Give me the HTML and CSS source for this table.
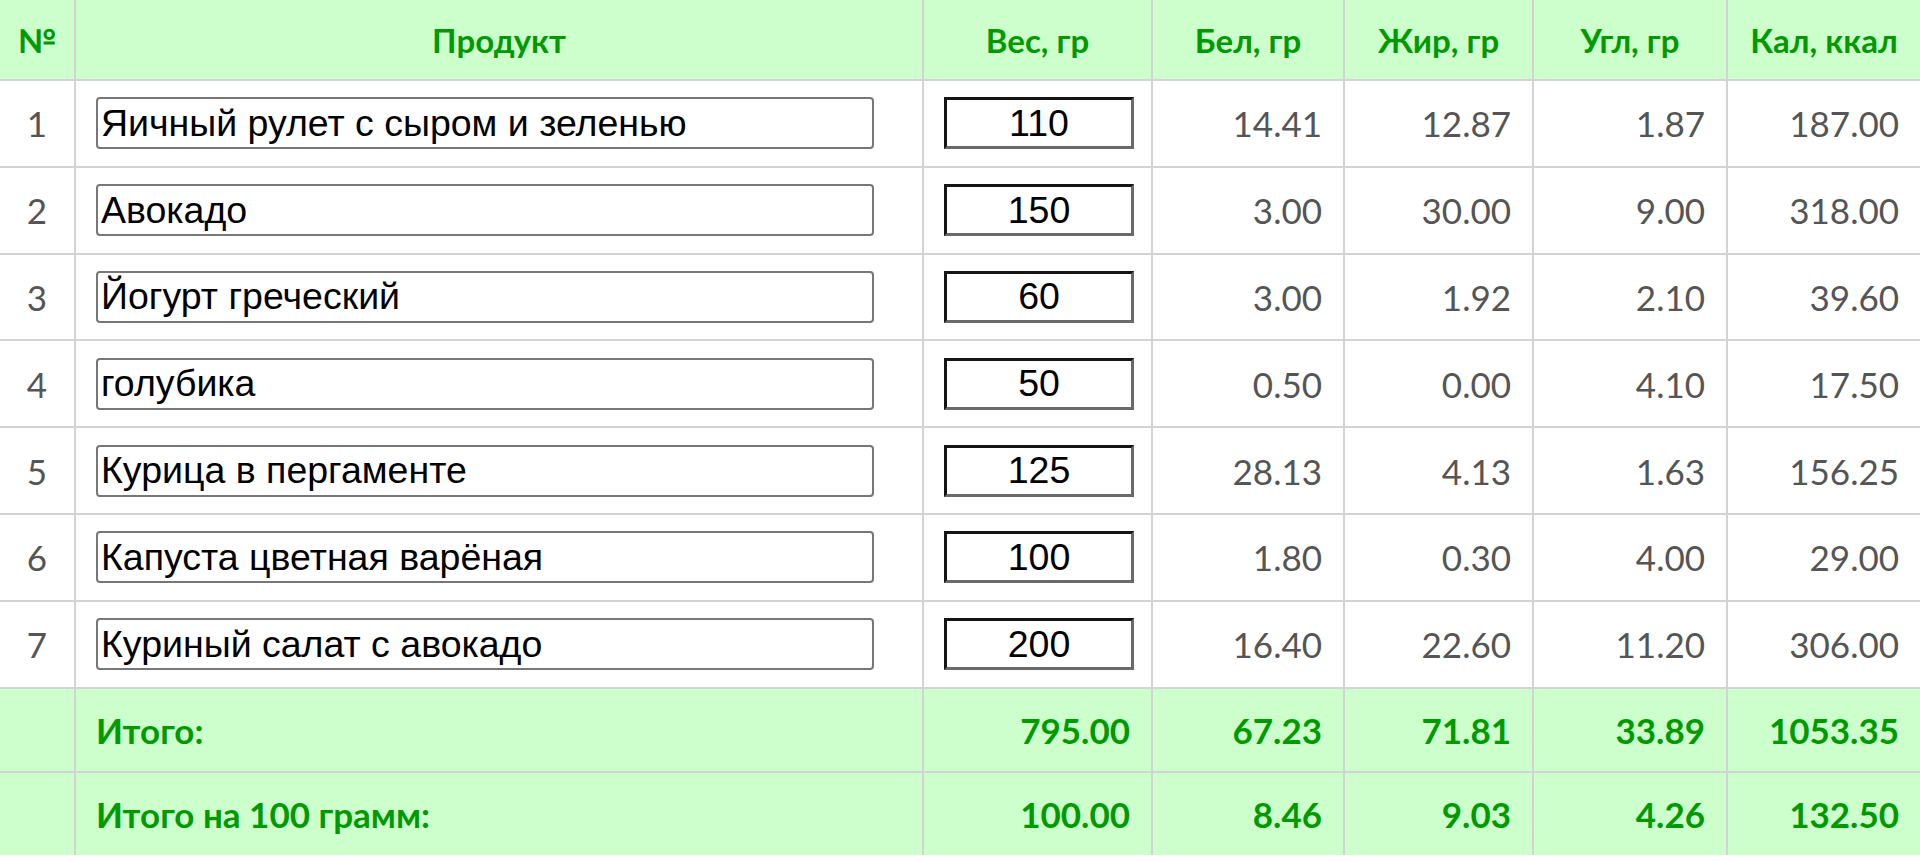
FILE: index.html
```html
<!DOCTYPE html>
<html lang="ru">
<head>
<meta charset="utf-8">
<title>Калькулятор калорий</title>
<link rel="stylesheet" href="styles.css">
</head>
<body>
<table class="calc">
  <colgroup>
    <col class="c-num">
    <col class="c-name">
    <col class="c-weight">
    <col class="c-prot">
    <col class="c-fat">
    <col class="c-carb">
    <col class="c-kcal">
  </colgroup>
  <thead>
    <tr>
      <th>№</th>
      <th>Продукт</th>
      <th>Вес, гр</th>
      <th>Бел, гр</th>
      <th>Жир, гр</th>
      <th>Угл, гр</th>
      <th>Кал, ккал</th>
    </tr>
  </thead>
  <tbody>
    <tr>
      <td class="num">1</td>
      <td class="name"><input class="name-input" type="text" value="Яичный рулет с сыром и зеленью"></td>
      <td class="weight"><input class="weight-input" type="text" value="110"></td>
      <td class="val">14.41</td><td class="val">12.87</td><td class="val">1.87</td><td class="val">187.00</td>
    </tr>
    <tr>
      <td class="num">2</td>
      <td class="name"><input class="name-input" type="text" value="Авокадо"></td>
      <td class="weight"><input class="weight-input" type="text" value="150"></td>
      <td class="val">3.00</td><td class="val">30.00</td><td class="val">9.00</td><td class="val">318.00</td>
    </tr>
    <tr>
      <td class="num">3</td>
      <td class="name"><input class="name-input" type="text" value="Йогурт греческий"></td>
      <td class="weight"><input class="weight-input" type="text" value="60"></td>
      <td class="val">3.00</td><td class="val">1.92</td><td class="val">2.10</td><td class="val">39.60</td>
    </tr>
    <tr>
      <td class="num">4</td>
      <td class="name"><input class="name-input" type="text" value="голубика"></td>
      <td class="weight"><input class="weight-input" type="text" value="50"></td>
      <td class="val">0.50</td><td class="val">0.00</td><td class="val">4.10</td><td class="val">17.50</td>
    </tr>
    <tr>
      <td class="num">5</td>
      <td class="name"><input class="name-input" type="text" value="Курица в пергаменте"></td>
      <td class="weight"><input class="weight-input" type="text" value="125"></td>
      <td class="val">28.13</td><td class="val">4.13</td><td class="val">1.63</td><td class="val">156.25</td>
    </tr>
    <tr>
      <td class="num">6</td>
      <td class="name"><input class="name-input" type="text" value="Капуста цветная варёная"></td>
      <td class="weight"><input class="weight-input" type="text" value="100"></td>
      <td class="val">1.80</td><td class="val">0.30</td><td class="val">4.00</td><td class="val">29.00</td>
    </tr>
    <tr>
      <td class="num">7</td>
      <td class="name"><input class="name-input" type="text" value="Куриный салат с авокадо"></td>
      <td class="weight"><input class="weight-input" type="text" value="200"></td>
      <td class="val">16.40</td><td class="val">22.60</td><td class="val">11.20</td><td class="val">306.00</td>
    </tr>
  </tbody>
  <tfoot>
    <tr>
      <td></td>
      <td class="label">Итого:</td>
      <td class="val">795.00</td><td class="val">67.23</td><td class="val">71.81</td><td class="val">33.89</td><td class="val">1053.35</td>
    </tr>
    <tr>
      <td></td>
      <td class="label">Итого на 100 грамм:</td>
      <td class="val">100.00</td><td class="val">8.46</td><td class="val">9.03</td><td class="val">4.26</td><td class="val">132.50</td>
    </tr>
  </tfoot>
</table>
</body>
</html>
```

FILE: styles.css
```css
html, body {
  margin: 0;
  padding: 0;
  background: #ffffff;
  overflow: hidden;
}

.calc {
  width: 1920px;
  table-layout: fixed;
  border-collapse: collapse;
  border-style: hidden;
  font-family: Lato, "Open Sans", sans-serif;
  font-size: 35px;
  color: #555555;
}

.c-num { width: 75px; }
.c-name { width: 848px; }
.c-weight { width: 229px; }
.c-prot { width: 192px; }
.c-fat { width: 189px; }
.c-carb { width: 194px; }
.c-kcal { width: 193px; }

.calc th,
.calc td {
  border: 2px solid #d3d3d3;
  padding: 0 20px;
  vertical-align: middle;
}

.calc thead th {
  height: 79px;
  background: #ccffcc;
  color: #009a00;
  font-weight: 700;
  font-size: 33px;
  text-align: center;
  padding: 0;
}

.calc tbody td {
  height: 84.8px;
}

.calc tbody .num {
  text-align: center;
  padding: 0;
}

.calc .val {
  text-align: right;
  padding-right: 21px;
}

.calc tfoot td {
  height: 82px;
  background: #ccffcc;
  color: #009a00;
  font-weight: 700;
}

.calc tfoot .label {
  text-align: left;
}

.name-input,
.weight-input {
  display: block;
  box-sizing: border-box;
  height: 52px;
  margin: 0;
  font-family: "Liberation Sans", Arial, sans-serif;
  font-size: 37.5px;
  color: #000000;
  background: #ffffff;
  outline: none;
}

.name-input {
  width: 778px;
  padding: 0 3px;
  border: 2px solid #777777;
  border-radius: 4px;
}

.weight-input {
  width: 190px;
  padding: 0;
  text-align: center;
  border-width: 3px;
  border-style: solid;
  border-color: #141414 #6a6a6a #6a6a6a #141414;
  border-radius: 0;
}
```
